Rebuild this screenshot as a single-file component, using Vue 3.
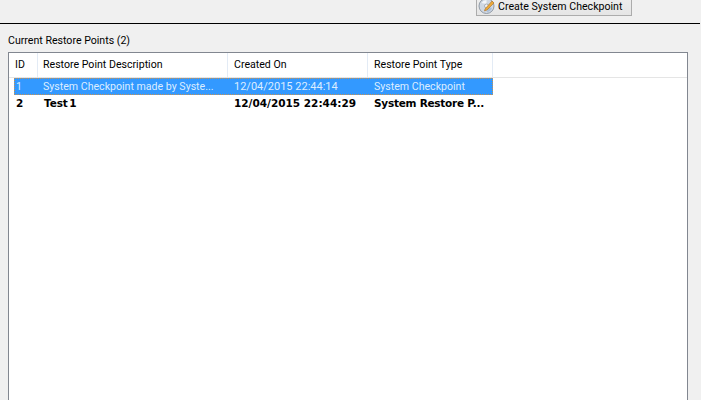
<script setup>
const cols = [
  { label: 'ID', width: 29 },
  { label: 'Restore Point Description', width: 190 },
  { label: 'Created On', width: 140 },
  { label: 'Restore Point Type', width: 125 },
]
const rows = [
  { id: '1', desc: 'System Checkpoint made by Syste...', created: '12/04/2015 22:44:14', type: 'System Checkpoint', selected: true },
  { id: '2', desc: 'Test 1', created: '12/04/2015 22:44:29', type: 'System Restore P...', selected: false },
]
</script>

<template>
  <div class="page">
    <div class="toolbar">
      <button class="btn">
        <svg class="disc" width="18" height="18" viewBox="0 0 18 18">
          <circle cx="8.5" cy="9" r="7.5" fill="#cfd8e4" stroke="#8f99a5" stroke-width="1" />
          <path d="M3.5 6 A6 6 0 0 1 8.5 3 L8.5 7 Z" fill="#f3f6fa" />
          <path d="M8.5 15 A6 6 0 0 0 14 11 L10.5 10 Z" fill="#a9bdd8" />
          <circle cx="8.5" cy="9" r="2" fill="#f4f4f4" stroke="#8f99a5" stroke-width="0.7" />
          <path d="M7 12 L14 4 L16 6 L9 13 L6.5 14 Z" fill="#eba93a" stroke="#a9702a" stroke-width="0.6" />
        </svg>
        <span>Create System Checkpoint</span>
      </button>
    </div>
    <div class="rule"></div>
    <div class="caption">Current Restore Points (2)</div>
    <div class="list">
      <div class="head">
        <div v-for="c in cols" :key="c.label" class="hcell" :style="{ width: c.width + 'px' }">{{ c.label }}</div>
      </div>
      <div class="body">
        <div v-for="r in rows" :key="r.id" class="row" :class="{ selected: r.selected, bold: !r.selected }">
          <div class="cell c0">{{ r.id }}</div>
          <div class="cell c1">{{ r.desc }}</div>
          <div class="cell c2">{{ r.created }}</div>
          <div class="cell c3">{{ r.type }}</div>
        </div>
      </div>
    </div>
  </div>
</template>

<style>
html, body { margin: 0; padding: 0; background: #f0f0f0; overflow: hidden; }
</style>

<style scoped>
.page {
  width: 701px;
  height: 400px;
  overflow: hidden;
  background: #f0f0f0;
  font-family: Roboto, "Liberation Sans", sans-serif;
  font-size: 10.6px;
  color: #000;
  box-sizing: border-box;
}
.toolbar {
  height: 23px;
  box-sizing: border-box;
  display: flex;
  align-items: flex-end;
  padding: 0 0 7px 476px;
}
.btn {
  width: 156px;
  height: 24px;
  flex: none;
  padding: 0 0 0 1px;
  margin: 0;
  display: flex;
  align-items: flex-end;
  gap: 2px;
  border: 1px solid #acacac;
  background: linear-gradient(#f0f0f0, #e5e5e5);
  font: inherit;
  color: #000;
  box-sizing: border-box;
}
.btn span { line-height: 14px; padding-bottom: 1px; white-space: nowrap; }
.disc { flex: none; }
.rule { height: 1px; background: #000; margin-right: 1px; }
.caption {
  margin: 10px 0 0 8px;
  height: 18px;
  line-height: 14px;
  white-space: nowrap;
}
.list {
  margin: 0 13px 0 8px;
  height: 400px;
  box-sizing: border-box;
  border: 1px solid #828790;
  border-bottom: none;
  background: #fff;
}
.head {
  display: flex;
  height: 25px;
  box-sizing: border-box;
  border-bottom: 1px solid #e5e5e5;
  background: #fff;
}
.hcell {
  flex: none;
  box-sizing: border-box;
  border-right: 1px solid #e3ebf5;
  padding-left: 6px;
  line-height: 24px;
  white-space: nowrap;
}
.hcell:nth-child(2) { padding-left: 5px; }
.row {
  display: flex;
  height: 17px;
  margin-left: 5px;
  width: 479px;
  line-height: 18px;
  white-space: nowrap;
}
.cell { flex: none; box-sizing: border-box; overflow: hidden; }
.c0 { width: 23px; padding-left: 2px; }
.c1 { width: 190px; padding-left: 6px; }
.c2 { width: 140px; padding-left: 7px; font-size: 11px; }
.c3 { width: 126px; padding-left: 7px; }
.row.selected {
  color: #dcedff;
  background:
    repeating-linear-gradient(90deg, #c9914f 0 1px, transparent 1px 2px) left top / 100% 1px no-repeat,
    repeating-linear-gradient(90deg, #c9914f 0 1px, transparent 1px 2px) left bottom / 100% 1px no-repeat,
    repeating-linear-gradient(180deg, #c9914f 0 1px, transparent 1px 2px) left top / 1px 100% no-repeat,
    repeating-linear-gradient(180deg, #c9914f 0 1px, transparent 1px 2px) right top / 1px 100% no-repeat,
    #3399ff;
}
.row.bold {
  font-family: "DejaVu Sans", sans-serif;
  font-weight: 700;
  font-size: 10.5px;
  line-height: 16px;
}
.row.bold .c1 { padding-left: 7px; word-spacing: -2px; letter-spacing: -0.1px; }
.row.bold .c2 { font-size: 10.5px; }
.row.bold .c3 { letter-spacing: -0.25px; }
</style>
